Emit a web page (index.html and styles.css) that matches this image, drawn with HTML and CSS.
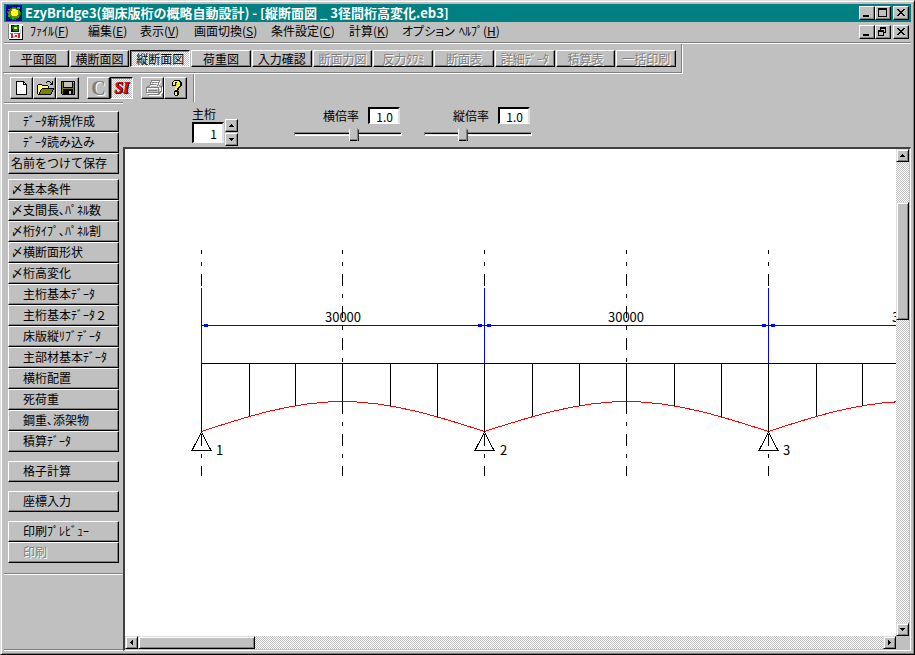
FILE: index.html
```html
<!DOCTYPE html>
<html lang="ja">
<head>
<meta charset="utf-8">
<title>EzyBridge3(鋼床版桁の概略自動設計)</title>
<link rel="stylesheet" href="styles.css">
</head>
<body>
<div class="window">
  <header class="titlebar">
    <svg class="app-icon" width="16" height="16" viewBox="0 0 16 16" shape-rendering="crispEdges" aria-hidden="true">
      <rect width="16" height="16" fill="#000080"/>
      <path d="M0 1h2v1H0zM3 0h2v1H3zM12 1h3v1h-3zM0 4h1v2H0zM15 4h1v3h-1zM0 9h2v1H0zM1 13h2v2H1zM14 10h2v1h-2zM12 14h3v1h-3zM5 15h2v1H5zM9 15h2v1H9zM6 1h1v1H6z" fill="#00f"/>
      <path d="M4 3h2V2h4v1h2v1h1v1h1v2h1v3h-1v2h-2v2h-2v1H6v-1H4v-1H3v-2H2V8H1V6h2V4h1z" fill="#008000"/>
      <path d="M5 4h1V3h4v1h1v1h2v1h1v3h-1v1h-1v2h-1v1H6v-1H5v-1H4v-1H3V9H2V7h1V6h1V5h1z" fill="#808000"/>
      <path d="M6 4h4v1h2v5h-1v1H6v-1H5V6h1z" fill="#ff0"/>
      <path d="M11 2h3v2h-3zM2 10h2v2H2zM2 4h2v1H2zM12 11h1v2h-1zM6 12h2v2H6z" fill="#0c0"/>
      <path d="M7 4h2v2H7z" fill="#fff"/>
    </svg>
    <h1>EzyBridge3(鋼床版桁の概略自動設計) - [縦断面図 _ 3径間桁高変化.eb3]</h1>
    <div class="captions">
      <button type="button" aria-label="最小化"><svg width="12" height="10" shape-rendering="crispEdges"><path d="M2 7h6v2H2z"/></svg></button>
      <button type="button" aria-label="最大化"><svg width="12" height="10" shape-rendering="crispEdges"><path fill-rule="evenodd" d="M1 0h9v9H1zM2 2v6h7V2z"/></svg></button>
      <button type="button" class="close" aria-label="閉じる"><svg width="12" height="10" shape-rendering="crispEdges"><path d="M2 1h2v1h1v1h2V2h1V1h2v1H9v1H8v1H7v1h1v1h1v1h1v1H8V7H7V6H5v1H4v1H2V7h1V6h1V5h1V4H4V3H3V2H2z"/></svg></button>
    </div>
  </header>

  <nav class="menubar">
    <svg class="doc-icon" width="16" height="16" viewBox="0 0 16 16" shape-rendering="crispEdges" aria-hidden="true">
      <path d="M0 0h14l1 1v15H0z" fill="#fff"/>
      <path d="M14 2h1v13h-1zM1 15h14v1H1z" fill="#000"/>
      <path d="M0 0h1v15H0z" fill="#808080"/>
      <path d="M3 1h8v7H3z" fill="#000080"/>
      <path d="M4 2h2V1h3v1h2v3h-1v2H5V5H4z" fill="#008000"/>
      <path d="M6 3h3v2H6z" fill="#ff0"/>
      <path d="M2 9h3v1H2zM6 9h5v1H6z" fill="#808080"/>
      <path d="M3 10h2v4H3zM7 11h2v2H7zM10 9h2v5h-2z" fill="#e02020"/>
      <path d="M5 12h2v2H5zM12 5h1v5h-1z" fill="#c0c0c0"/>
    </svg>
    <ul>
      <li><a href="#file">ﾌｧｲﾙ(<u>F</u>)</a></li>
      <li><a href="#edit">編集(<u>E</u>)</a></li>
      <li><a href="#view">表示(<u>V</u>)</a></li>
      <li><a href="#screen">画面切換(<u>S</u>)</a></li>
      <li><a href="#cond">条件設定(<u>C</u>)</a></li>
      <li><a href="#calc">計算(<u>K</u>)</a></li>
      <li><a href="#option" class="kana">オプション</a></li>
      <li><a href="#help">ﾍﾙﾌﾟ(<u>H</u>)</a></li>
    </ul>
    <div class="captions">
      <button type="button" aria-label="文書を最小化"><svg width="12" height="10" shape-rendering="crispEdges"><path d="M2 7h6v2H2z"/></svg></button>
      <button type="button" aria-label="文書を元に戻す"><svg width="12" height="10" shape-rendering="crispEdges"><path fill-rule="evenodd" d="M3 0h6v6H7V5h1V2H4v1H3zM1 3h6v6H1zM2 5v3h4V5z"/></svg></button>
      <button type="button" class="close" aria-label="文書を閉じる"><svg width="12" height="10" shape-rendering="crispEdges"><path d="M2 1h2v1h1v1h2V2h1V1h2v1H9v1H8v1H7v1h1v1h1v1h1v1H8V7H7V6H5v1H4v1H2V7h1V6h1V5h1V4H4V3H3V2H2z"/></svg></button>
    </div>
  </nav>

  <div class="viewbar">
    <button type="button">平面図</button>
    <button type="button">横断面図</button>
    <button type="button" class="pressed" aria-pressed="true">縦断面図</button>
    <button type="button">荷重図</button>
    <button type="button">入力確認</button>
    <button type="button" disabled>断面力図</button>
    <button type="button" disabled>反力ﾀﾜﾐ</button>
    <button type="button" disabled>断面表</button>
    <button type="button" disabled>詳細ﾃﾞｰﾀ</button>
    <button type="button" disabled>積算表</button>
    <button type="button" disabled>一括印刷</button>
  </div>

  <div class="iconbar">
    <div class="icon-group">
      <button type="button" aria-label="新規"><svg width="20" height="18" shape-rendering="crispEdges"><path d="M4.500 2.500h7l3 3v10h-10z" fill="#fff" stroke="#000"/><path d="M11 2h1v3h3v1h-4z"/></svg></button>
      <button type="button" aria-label="開く"><svg width="20" height="18" shape-rendering="crispEdges"><path d="M3 6h4v1h6v3H8v1H6v2H5v2H3z" fill="#ffff80"/><path d="M6 10h12v1h-1v2h-1v2H4v-1h1v-2h1z" fill="#808000"/><path d="M3 5h4v1H3zM2 6h1v9H2zM7 6h6v1H7zM13 7h1v2h-1zM7 9h12v1H7zM6 10h1v1H6zM5 11h1v2H5zM4 13h1v2H4zM3 15h13v1H3zM18 10h1v1h-1zM17 11h1v2h-1zM16 13h1v2h-1zM11 3h1v1h-1zM12 2h3v1h-3zM15 3h1v1h1V2h1v4h-3V5h1V4h-1z"/></svg></button>
      <button type="button" aria-label="保存"><svg width="20" height="18" shape-rendering="crispEdges"><path d="M3 2h14v14H4v-1H3z"/><path d="M4 3h1v12H4zM15 4h1v11h-1zM5 9h10v1H5z" fill="#808000"/><path d="M6 3h8v5H6zM11 12h2v3h-2zM15 3h1v1h-1z" fill="#c0c0c0"/></svg></button>
    </div>
    <div class="icon-group">
      <button type="button" class="letter-c">C</button>
      <button type="button" class="pressed letter-si" aria-pressed="true">SI</button>
    </div>
    <div class="icon-group">
      <button type="button" disabled aria-label="印刷"><svg width="20" height="18" shape-rendering="crispEdges"><g transform="translate(1 1)" fill="none" stroke="#fff"><path d="M6.500 7.500l2-6h8l-2 6M9 3.500h5M8 5.500h5M3.500 8.500h13v5h-13zM5 15.500h11l2-3v-5l-2-1"/></g><path d="M6.500 7.500l2-6h8l-2 6M9 3.500h5M8 5.500h5M3.500 8.500h12v5h-12zM3.500 8.500l3-2M5 15.500h10l3-3v-5l-2-1M5 11.500h9" fill="none" stroke="#808080"/></svg></button>
      <button type="button" aria-label="ヘルプ"><svg width="20" height="18" shape-rendering="crispEdges"><path d="M8 1h6v1h1v1h1v4h-1v1h-1v1h-1v2h-1v1h1v4h-1v1H9v-1H8v-4h1V8h1V7h1V4h-1v3H6V3h1V2h1z"/><path d="M8 2h5v1h1v4h-1v1h-1v1h-1v2H9V8h1V7h1V3H9v3H7V3h1zM9 13h2v3H9z" fill="#ff0"/></svg></button>
    </div>
  </div>

  <div class="workspace">
    <aside class="sidebar">
      <div class="side-group files">
        <button type="button"><span class="mark"></span>ﾃﾞｰﾀ新規作成</button>
        <button type="button"><span class="mark"></span>ﾃﾞｰﾀ読み込み</button>
        <button type="button">名前をつけて保存</button>
      </div>
      <div class="side-group">
        <button type="button"><span class="mark">〆</span>基本条件</button>
        <button type="button"><span class="mark">〆</span>支間長､ﾊﾟﾈﾙ数</button>
        <button type="button"><span class="mark">〆</span>桁ﾀｲﾌﾟ､ﾊﾟﾈﾙ割</button>
        <button type="button"><span class="mark">〆</span>横断面形状</button>
        <button type="button"><span class="mark">〆</span>桁高変化</button>
        <button type="button"><span class="mark"></span>主桁基本ﾃﾞｰﾀ</button>
        <button type="button"><span class="mark"></span>主桁基本ﾃﾞｰﾀ２</button>
        <button type="button"><span class="mark"></span>床版縦ﾘﾌﾞﾃﾞｰﾀ</button>
        <button type="button"><span class="mark"></span>主部材基本ﾃﾞｰﾀ</button>
        <button type="button"><span class="mark"></span>横桁配置</button>
        <button type="button"><span class="mark"></span>死荷重</button>
        <button type="button"><span class="mark"></span>鋼重､添架物</button>
        <button type="button"><span class="mark"></span>積算ﾃﾞｰﾀ</button>
      </div>
      <div class="side-group">
        <button type="button"><span class="mark"></span>格子計算</button>
      </div>
      <div class="side-group">
        <button type="button"><span class="mark"></span>座標入力</button>
      </div>
      <div class="side-group output">
        <button type="button"><span class="mark"></span>印刷ﾌﾟﾚﾋﾞｭｰ</button>
        <button type="button" disabled><span class="mark"></span>印刷</button>
      </div>
    </aside>

    <main>
      <div class="controls">
        <div class="girder">
          <label for="girder">主桁</label>
          <div class="spin">
            <input id="girder" type="text" value="1">
            <div class="spin-buttons">
              <button type="button" aria-label="増やす"><svg width="5" height="3" shape-rendering="crispEdges"><path d="M2 0h1v1h1v1h1v1H0V2h1V1h1z"/></svg></button>
              <button type="button" aria-label="減らす"><svg width="5" height="3" shape-rendering="crispEdges"><path d="M0 0h5v1H4v1H3v1H2V2H1V1H0z"/></svg></button>
            </div>
          </div>
        </div>
        <div class="scale">
          <div class="scale-head">
            <label for="hscale">横倍率</label>
            <input type="text" value="1.0" aria-label="横倍率の値">
          </div>
          <input id="hscale" type="range" min="0" max="100" value="56">
        </div>
        <div class="scale">
          <div class="scale-head">
            <label for="vscale">縦倍率</label>
            <input type="text" value="1.0" aria-label="縦倍率の値">
          </div>
          <input id="vscale" type="range" min="0" max="100" value="34">
        </div>
      </div>

      <div class="view">
        <div class="drawing">
          <svg width="100%" height="100%" role="img" aria-label="縦断面図">
            <g transform="translate(76 214)" fill="none" stroke="#000" shape-rendering="crispEdges">
              <!-- girder depth curve -->
              <g stroke="#f00">
                <path d="M0.500 68.500C47 53 94 38.500 141.500 38.500S236 53 283.500 68.500"/>
                <path d="M283.500 68.500C331 53 378 38.500 425.500 38.500S520 53 567.500 68.500"/>
                <path d="M567.500 68.500C614 53 661 38.500 708.500 38.500"/>
              </g>
              <!-- centre lines of supports and spans -->
              <path stroke-dasharray="12 8 4 8" stroke-dashoffset="8" d="M.5-113V113M141.500-113V113M283.500-113V113M425.500-113V113M567.500-113V113"/>
              <!-- deck and panel lines -->
              <path d="M0 .5H900M.5 0V68M48.500 0V53M94.500 0V43M141.500 0V39M189.500 0V43M236.500 0V54M283.500 0V68M331.500 0V53M378.500 0V43M425.500 0V39M473.500 0V43M520.500 0V54M567.500 0V68M615.500 0V53M661.500 0V43M708.500 0V39"/>
              <!-- supports -->
              <path d="M.5 69L-9 87.500H10zM283.500 69L274 87.500H293zM567.500 69L558 87.500H577z"/>
              <!-- span dimensions -->
              <path stroke="#00f" d="M.5-75V0M283.500-75V0M567.500-75V0M0-37.500H900"/>
              <path stroke="none" fill="#00f" d="M3-39h4v3H3zM277-39h4v3h-4zM286-39h4v3h-4zM561-39h4v3h-4zM570-39h4v3h-4z"/>
            </g>
            <g class="dims" transform="translate(76 214)">
              <text x="142" y="-41" text-anchor="middle">30000</text>
              <text x="425" y="-41" text-anchor="middle">30000</text>
              <text x="709" y="-41" text-anchor="middle">30000</text>
              <text x="15" y="92">1</text>
              <text x="299" y="92">2</text>
              <text x="582" y="92">3</text>
            </g>
          </svg>
        </div>
        <div class="scroll vertical">
          <button type="button" aria-label="上へ"><svg width="5" height="3" shape-rendering="crispEdges"><path d="M2 0h1v1h1v1h1v1H0V2h1V1h1z"/></svg></button>
          <div class="track"><div class="thumb"></div></div>
          <button type="button" aria-label="下へ"><svg width="5" height="3" shape-rendering="crispEdges"><path d="M0 0h5v1H4v1H3v1H2V2H1V1H0z"/></svg></button>
        </div>
        <div class="scroll horizontal">
          <button type="button" aria-label="左へ"><svg width="3" height="5" shape-rendering="crispEdges"><path d="M2 0h1v5H2V4H1V3H0V2h1V1h1z"/></svg></button>
          <div class="track"><div class="thumb"></div></div>
          <button type="button" aria-label="右へ"><svg width="3" height="5" shape-rendering="crispEdges"><path d="M0 0h1v1h1v1h1v1H2v1H1v1H0z"/></svg></button>
        </div>
      </div>
    </main>
  </div>
</div>
</body>
</html>
```

FILE: styles.css
```css
:root {
  --face: #c0c0c0;
  --shade: #808080;
  --dither: repeating-conic-gradient(#c0c0c0 0 25%, #fff 0 50%) 0 0 / 2px 2px;
}

* { box-sizing: border-box; }

body, button, input {
  font-family: "Noto Sans CJK JP", sans-serif;
  font-size: 12px;
  line-height: 14px;
  color: #000;
}

body { margin: 0; }
svg { display: block; }

.window {
  display: flex;
  flex-direction: column;
  min-height: 100vh;
  padding: 2px;
  background: var(--face);
  border: 1px solid;
  border-color: #dfdfdf #000 #000 #dfdfdf;
  box-shadow: inset 1px 1px #fff, inset -1px -1px var(--shade);
}

/* raised and pressed buttons */
button {
  display: flex;
  align-items: center;
  justify-content: center;
  margin: 0;
  padding: 0;
  white-space: nowrap;
  background: var(--face);
  border: 1px solid;
  border-color: #fff #000 #000 #fff;
  border-radius: 0;
  box-shadow: inset -1px -1px var(--shade);
}
button:disabled { color: var(--shade); text-shadow: 1px 1px #fff; }
button.pressed {
  background: var(--dither);
  border-color: #000 #fff #fff #000;
  box-shadow: inset 1px 1px var(--shade);
}

/* title bar */
.titlebar {
  display: flex;
  align-items: center;
  height: 18px;
  margin: 1px 1px 0;
  padding: 0 2px;
  background: #008080;
}
.titlebar h1 {
  flex: 1;
  margin: 0 0 0 3px;
  font-size: 13px;
  line-height: 18px;
  font-weight: 700;
  color: #fff;
  white-space: nowrap;
}
.captions { display: flex; }
.captions button { width: 16px; height: 14px; }
.captions .close { margin-left: 2px; }

/* menu bar */
.menubar {
  display: flex;
  align-items: center;
  height: 21px;
  margin: 0 1px;
  padding: 0 2px 0 4px;
  border-bottom: 1px solid var(--shade);
  box-shadow: 0 1px #fff;
}
.menubar ul {
  flex: 1;
  display: grid;
  grid-template-columns: 58px 52px 54px 77px 78px 53px 57px 56px;
  margin: 0 0 0 6px;
  padding: 0 0 2px;
  list-style: none;
}
.menubar a { color: #000; text-decoration: none; white-space: nowrap; }
.kana { font-feature-settings: "palt"; }

/* view buttons */
.viewbar {
  align-self: flex-start;
  display: flex;
  gap: 1px;
  width: 100%;
  max-width: 679px;
  padding: 6px 5px 5px 6px;
  border: solid var(--shade);
  border-width: 0 1px 1px 0;
  box-shadow: 1px 1px #fff;
  margin-top: 1px;
}
.viewbar button { flex: 1; height: 17px; }

/* icon buttons */
.iconbar {
  align-self: flex-start;
  display: flex;
  gap: 8px;
  margin-top: 1px;
  padding: 3px 6px 3px 7px;
  border-right: 1px solid var(--shade);
  box-shadow: 1px 0 #fff;
}
.icon-group { display: flex; }
.icon-group button { width: 23px; height: 22px; }
.icon-group .letter-c {
  font: 900 20px/18px "Liberation Serif", serif;
  color: var(--shade);
  text-shadow: 1px 1px #fff;
}
.icon-group .letter-si {
  font: italic 900 16px/18px "Liberation Serif", serif;
  color: #f00;
  text-shadow: 1px 0 #000, 1px 1px #000;
}

/* work area */
.workspace { flex: 1; display: flex; }

.sidebar {
  flex: none;
  width: 119px;
  margin: 0 0 2px 1px;
  padding: 8px 4px 0;
  border-top: 1px solid var(--shade);
  border-bottom: 1px solid var(--shade);
  box-shadow: inset 0 1px #fff, 0 1px #fff;
}
.side-group { margin-bottom: 9px; }
.side-group.files { margin-bottom: 5px; }
.side-group button {
  width: 100%;
  height: 21px;
  padding: 0 0 1px 2px;
  justify-content: flex-start;
}
.side-group.output {
  margin: 0 -4px;
  padding: 0 4px 10px;
  border-bottom: 1px solid var(--shade);
  box-shadow: 0 1px #fff;
}
.mark { flex: none; width: 12px; }

main {
  flex: 1;
  min-width: 0;
  display: flex;
  flex-direction: column;
  padding: 0 1px 1px 0;
}

.controls {
  display: flex;
  align-items: flex-start;
  height: 45px;
  padding: 5px 0 0 69px;
}
.controls input[type="text"] {
  margin: 0;
  padding: 0 5px;
  background: #fff;
  border: solid;
  border-width: 2px 2px 1px;
  border-color: #000 #dfdfdf #fff #000;
  border-radius: 0;
  text-align: right;
  outline: 0;
}
.girder { width: 102px; }
.girder label { display: block; height: 15px; }
.spin { display: flex; align-items: flex-start; gap: 1px; }
.spin input { width: 32px; height: 21px; }
.spin-buttons { display: grid; gap: 1px; margin-top: -3px; }
.spin-buttons button { width: 13px; height: 13px; }

.scale { width: 108px; margin-right: 22px; }
.scale-head {
  display: flex;
  align-items: center;
  justify-content: flex-end;
  gap: 9px;
  height: 17px;
  padding-right: 2px;
}
.scale-head .scale-head input,
.scale-head input { width: 32px; height: 17px; line-height: 12px; }

input[type="range"] {
  -webkit-appearance: none;
  appearance: none;
  display: block;
  width: 100%;
  height: 20px;
  margin: 0;
  background: transparent;
}
input[type="range"]::-webkit-slider-runnable-track {
  height: 4px;
  border: 1px solid;
  border-color: var(--shade) #fff #fff var(--shade);
  background: linear-gradient(#000 0 1px, #dfdfdf 1px);
}
input[type="range"]::-webkit-slider-thumb {
  -webkit-appearance: none;
  width: 10px;
  height: 16px;
  margin-top: -8px;
  background:
    linear-gradient(90deg, #fff 0 1px, transparent 1px 8px, var(--shade) 8px 9px, #000 9px),
    linear-gradient(var(--face) 0 14px, var(--shade) 14px 15px, #000 15px);
  clip-path: polygon(0 5px, 4px 0, 6px 0, 100% 5px, 100% 100%, 0 100%);
}

/* drawing view with its scroll bars */
.view {
  flex: 1;
  display: grid;
  grid-template: minmax(0, 1fr) 13px / minmax(0, 1fr) 13px;
  padding: 0 1px 1px 0;
  border: solid;
  border-color: #404040 #fff #fff #404040;
  border-width: 2px 1px 1px 2px;
}
.drawing { position: relative; min-height: 480px; background: #fff; overflow: hidden; }
.drawing > svg { position: absolute; inset: 0; }
.dims { font-family: "Noto Sans CJK JP", sans-serif; font-size: 13px; fill: #000; }

.scroll { display: flex; background: var(--dither); }
.scroll button { flex: none; width: 13px; height: 13px; }
.scroll button, .thumb {
  background: var(--face);
  border: 1px solid;
  border-color: #dfdfdf #000 #000 #dfdfdf;
  box-shadow: inset 1px 1px #fff, inset -1px -1px var(--shade);
}
.vertical { flex-direction: column; }
.track { flex: 1; display: flex; }
.vertical .track { flex-direction: column; padding-top: 40px; }
.vertical .thumb { width: 13px; height: 28%; }
.horizontal .thumb { width: 117px; height: 13px; }
```
